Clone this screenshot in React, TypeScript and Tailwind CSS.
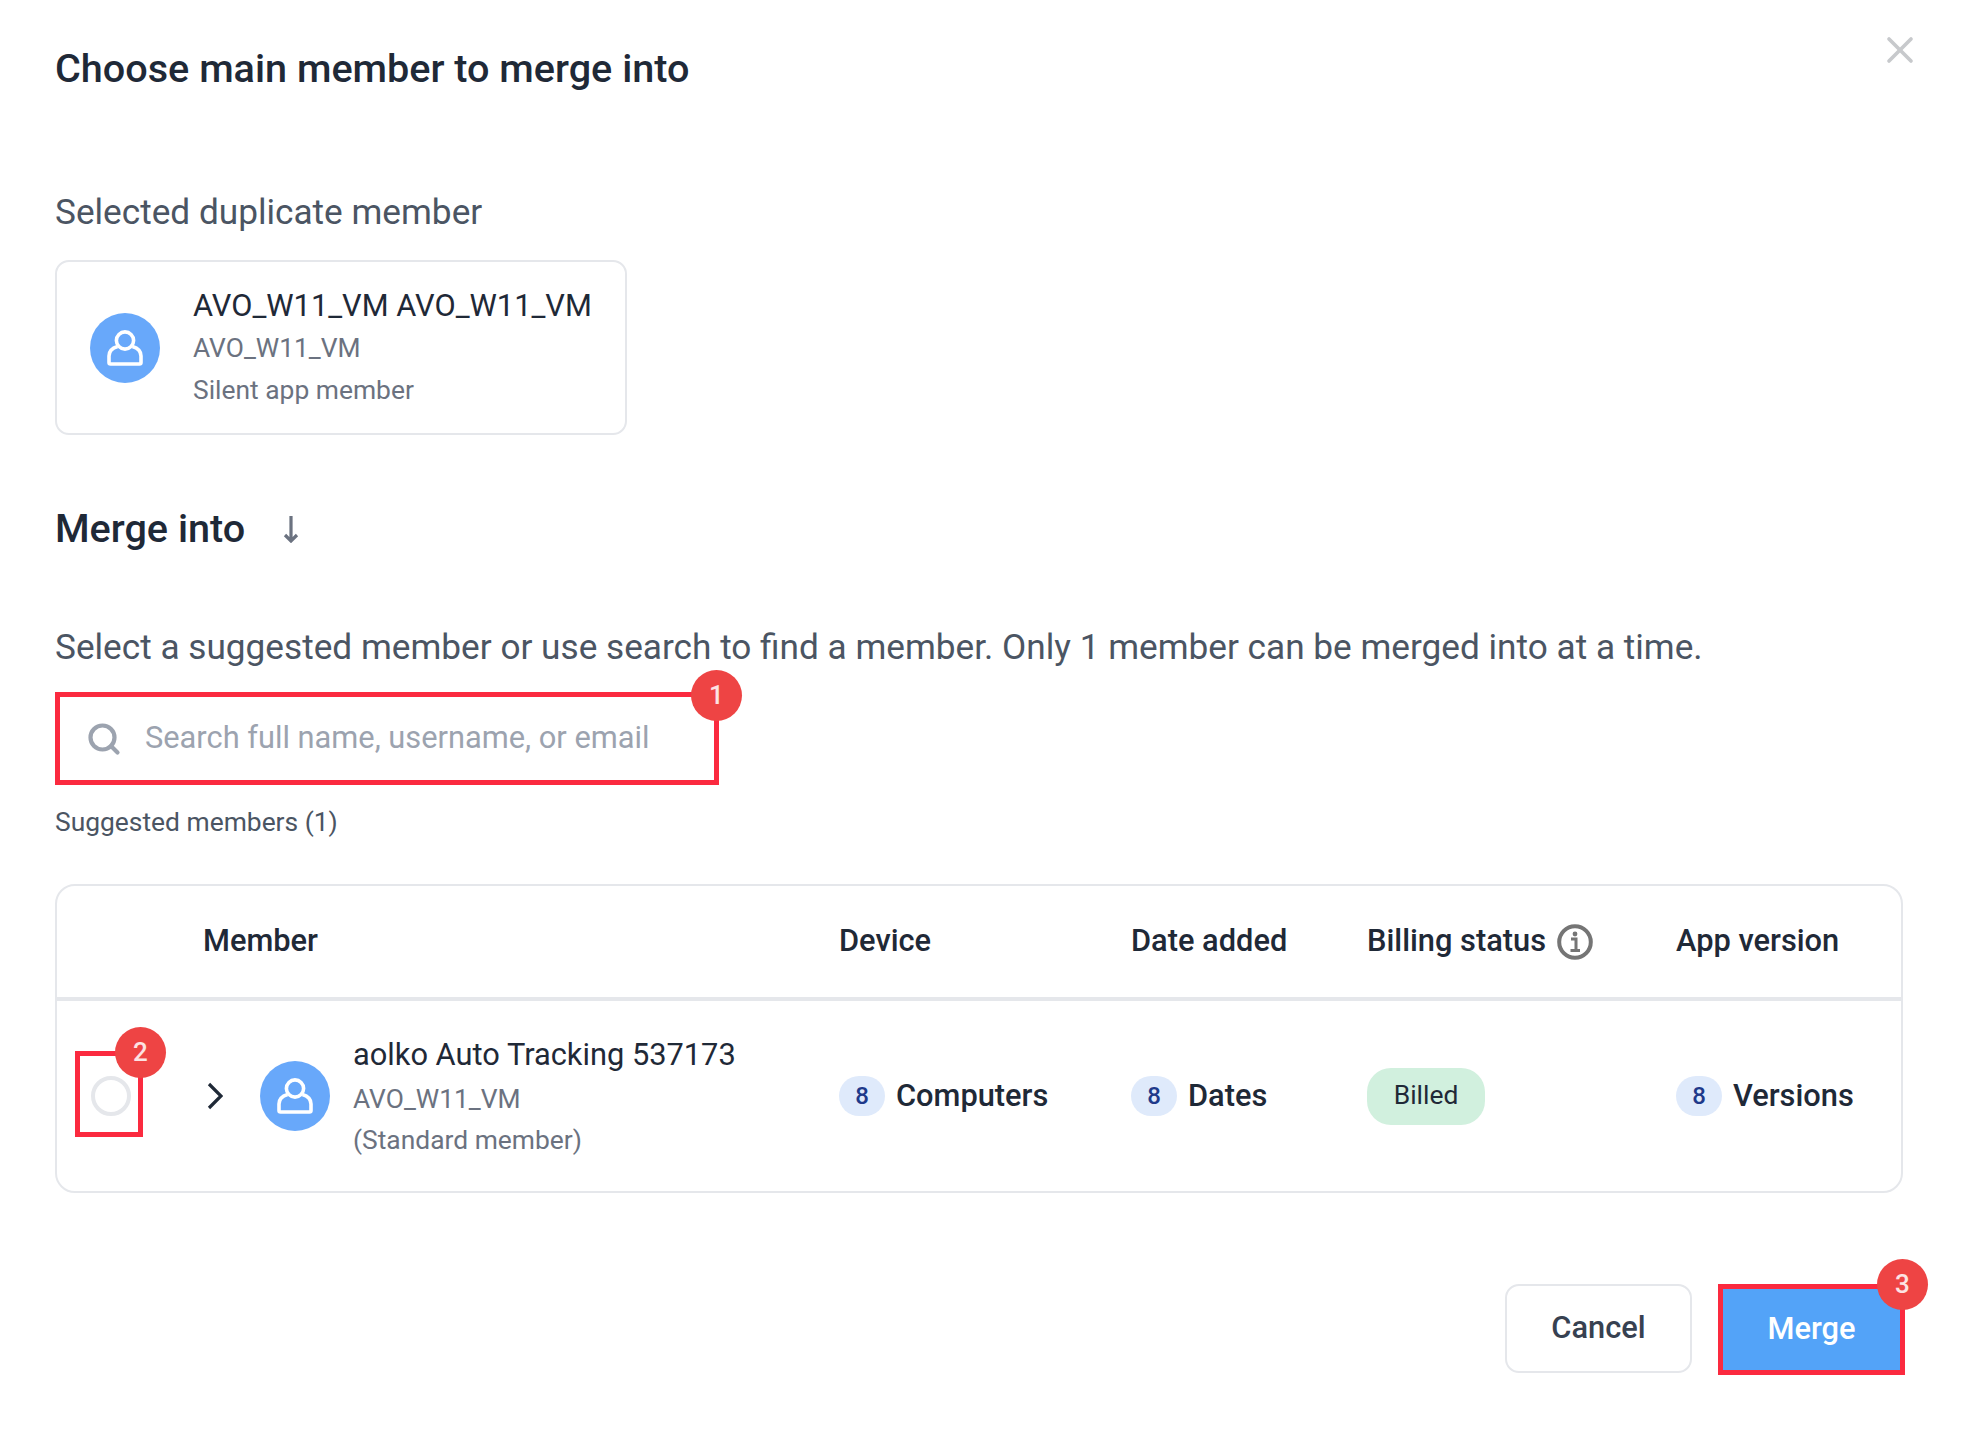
import { Search, X } from "lucide-react";

const COLS = "grid grid-cols-[146px_636px_292px_236px_309px_1fr] items-center";

function Avatar() {
  return (
    <span className="grid h-[70px] w-[70px] shrink-0 place-items-center rounded-full bg-[#68a8fa]">
      <svg width="36" height="36" viewBox="0 0 36 36" fill="none" stroke="#fff" strokeWidth="3.6" strokeLinejoin="round">
        <circle cx="18" cy="10.5" r="8.6" />
        <path d="M10.5 16.5C5.5 18 2 21 2 26V32.5Q2 34 3.5 34H32.5Q34 34 34 32.5V26C34 21 30.5 18 25.5 16.5" />
      </svg>
    </span>
  );
}

function Step({ n, className }: { n: number; className: string }) {
  return (
    <span className={`absolute z-10 grid h-[51px] w-[51px] place-items-center rounded-full bg-[#ee4444] text-[26px] font-medium text-white/85 ${className}`}>
      {n}
    </span>
  );
}

function Count({ label }: { label: string }) {
  return (
    <div className="flex items-center gap-[11px]">
      <span className="grid h-10 w-[46px] place-items-center rounded-full bg-[#dfeafb] text-[24px] font-medium text-[#1e3a8a]">8</span>
      <span className="text-[30.8px] font-medium text-[#1f2937]">{label}</span>
    </div>
  );
}

export default function App() {
  return (
    <div className="relative min-h-[1432px] w-[1964px] bg-white pl-[55px] pr-[61px] pt-[44px] font-['Roboto',sans-serif]">
      <button type="button" className="absolute right-[42px] top-[28px] text-[#c7c9cc]">
        <X size={44} strokeWidth={2} />
      </button>

      <h1 className="text-[39.6px] font-medium leading-[50px] text-[#1f2937]">Choose main member to merge into</h1>

      <p className="mt-[93px] text-[35.2px] leading-[50px] text-[#4b5563]">Selected duplicate member</p>

      <div className="mt-[23px] flex h-[175px] w-[572px] items-center gap-[33px] rounded-[14px] border-2 border-[#e5e7eb] pl-[33px]">
        <Avatar />
        <div>
          <div className="text-[30.8px] leading-[44px] text-[#1f2937]">AVO_W11_VM AVO_W11_VM</div>
          <div className="text-[26.4px] leading-[41px] text-[#6b7280]">AVO_W11_VM</div>
          <div className="text-[26.4px] leading-[42px] text-[#6b7280]">Silent app member</div>
        </div>
      </div>

      <div className="mt-[69px] flex items-center gap-[38px]">
        <h2 className="text-[39.6px] font-medium leading-[50px] text-[#1f2937]">Merge into</h2>
        <svg width="16" height="28" viewBox="0 0 16 28" fill="none" stroke="#6b7280" strokeWidth="3.2">
          <path d="M8 1V26M2 20L8 26L14 20" />
        </svg>
      </div>

      <p className="mt-[68px] text-[35.2px] leading-[50px] text-[#4b5563]">
        Select a suggested member or use search to find a member. Only 1 member can be merged into at a time.
      </p>

      <div className="relative mt-[20px] flex h-[93px] w-[664px] items-center gap-[23px] border-[5px] border-[#fb2a3f] pl-[26px]">
        <Search size={36} strokeWidth={2.8} className="text-[#9ca3af]" />
        <span className="text-[30.8px] text-[#9ca3af]">Search full name, username, or email</span>
        <Step n={1} className="-right-[28px] -top-[27px]" />
      </div>

      <p className="mt-[19px] text-[26.4px] leading-[36px] text-[#4b5563]">Suggested members (1)</p>

      <div className="relative mt-[44px] rounded-[20px] border-2 border-[#e5e7eb]">
        <div className={`${COLS} h-[115px] border-b-4 border-[#e5e7eb] text-[30.8px] font-medium text-[#1f2937]`}>
          <span />
          <span>Member</span>
          <span>Device</span>
          <span>Date added</span>
          <span className="flex items-center gap-[11px]">
            Billing status
            <svg width="36" height="36" viewBox="0 0 36 36" fill="none">
              <circle cx="18" cy="18" r="15.8" stroke="#757575" strokeWidth="4" />
              <path d="M14 15H19V26M13.5 26.5H23" stroke="#757575" strokeWidth="3" />
              <circle cx="18" cy="10" r="2.4" fill="#757575" />
            </svg>
          </span>
          <span>App version</span>
        </div>

        <div className={`${COLS} h-[190px]`}>
          <div className="relative flex h-full items-center">
            <span className="ml-[34px] h-10 w-10 rounded-full border-[4px] border-[#e5e7eb]" />
            <span className="absolute left-[18px] top-[50px] h-[86px] w-[68px] border-[5px] border-[#fb2a3f]" />
            <Step n={2} className="left-[58px] top-[26px]" />
          </div>
          <div className="ml-[4px] flex items-center gap-[37px]">
            <svg width="16" height="28" viewBox="0 0 16 28" fill="none" stroke="#1f2937" strokeWidth="3.2">
              <path d="M2 2L14 14L2 26" />
            </svg>
            <div className="flex items-center gap-[23px]">
              <Avatar />
              <div>
                <div className="text-[30.8px] leading-[46px] text-[#1f2937]">aolko Auto Tracking 537173</div>
                <div className="text-[26.4px] leading-[42px] text-[#6b7280]">AVO_W11_VM</div>
                <div className="text-[26.4px] leading-[41px] text-[#6b7280]">(Standard member)</div>
              </div>
            </div>
          </div>
          <Count label="Computers" />
          <Count label="Dates" />
          <div>
            <span className="grid h-[57px] w-[118px] place-items-center rounded-[24px] bg-[#d1f0de] text-[26.4px] text-[#1f2937]">Billed</span>
          </div>
          <Count label="Versions" />
        </div>
      </div>

      <div className="mt-[91px] flex justify-end gap-[26px]">
        <button type="button" className="h-[89px] w-[187px] rounded-[14px] border-2 border-[#e5e7eb] text-[30.8px] font-medium text-[#374151]">
          Cancel
        </button>
        <button type="button" className="relative -mr-[2px] h-[91px] w-[187px] border-[5px] border-[#fb2a3f] bg-[#53a3f8] text-[30.8px] font-medium text-white">
          Merge
          <Step n={3} className="-right-[28px] -top-[30px]" />
        </button>
      </div>
    </div>
  );
}
